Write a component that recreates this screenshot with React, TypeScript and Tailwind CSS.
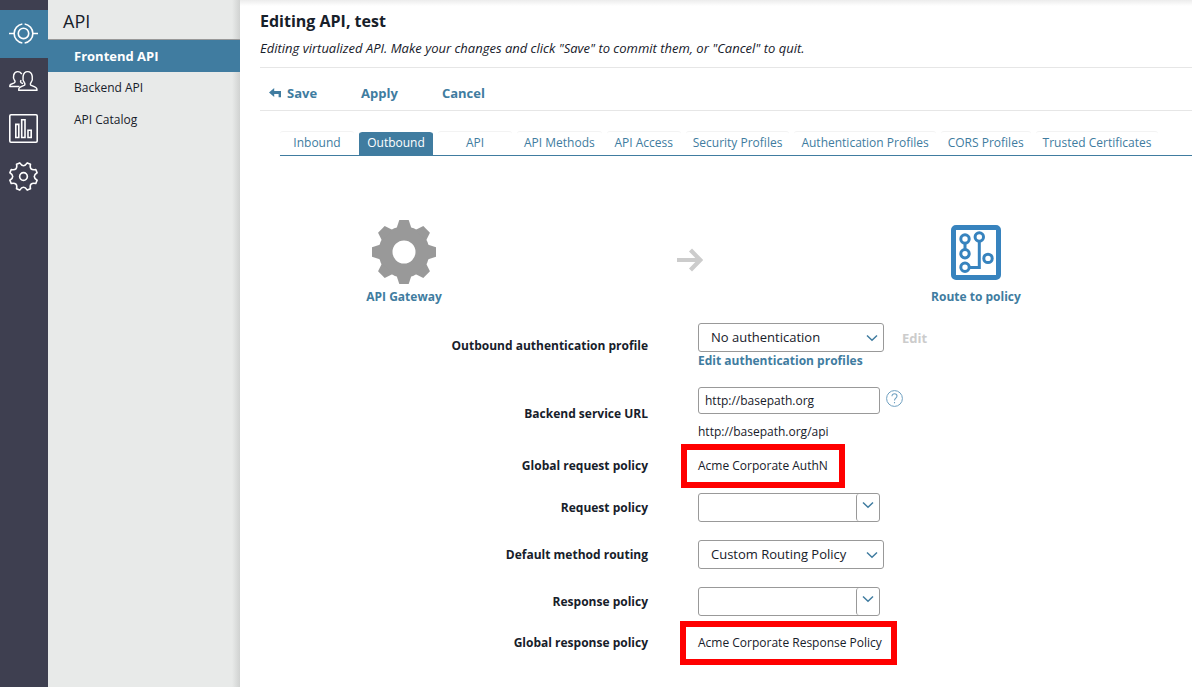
import { useState } from 'react'
import type { ReactNode } from 'react'

const gearTeeth = [0, 45, 90, 135, 180, 225, 270, 315]

function polar(radius: number, degrees: number) {
  const angle = (degrees * Math.PI) / 180
  return `${(radius * Math.cos(angle)).toFixed(2)} ${(radius * Math.sin(angle)).toFixed(2)}`
}

const cogPath =
  gearTeeth
    .map((angle, index) => {
      const tooth = angle + 22.5
      return `${index === 0 ? 'M' : 'L'}${polar(14.6, tooth - 7)}L${polar(14.6, tooth + 7)}Q${polar(8.2, tooth + 22.5)} ${polar(14.6, tooth + 38)}`
    })
    .join('') + 'Z'

function TargetIcon() {
  return (
    <svg width="29" height="29" viewBox="0 -1 30 30" fill="none" stroke="#fff" strokeWidth="1.7" aria-hidden="true">
      <circle cx="15" cy="15" r="5.4" />
      <path d="M13.8 5.2A9.9 9.9 0 0 0 13.8 24.8M16.2 5.2A9.9 9.9 0 0 1 16.2 24.8M0 15H5.2M24.8 15H30" />
    </svg>
  )
}

function UsersIcon() {
  return (
    <svg width="29" height="29" viewBox="0 0 30 30" fill="none" stroke="#fff" strokeWidth="1.5" strokeLinejoin="round" aria-hidden="true">
      <path d="M10 25H29C29 22.5 27.7 21.9 23 20.1C21.9 19.6 21.9 18 22.8 17C25 14.2 25 5.8 19.3 5.8C13.6 5.8 13.6 14.2 15.8 17C16.7 18 16.7 19.6 15.6 20.1C11 21.9 10 22.5 10 25Z" />
      <path d="M10.8 21.2H.8C.8 19.2 1.8 18.8 5.4 17.4C6.5 16.9 6.5 15.8 5.7 14.8C3.7 12 4.4 5.8 9 5.8C11 5.8 12.4 6.8 13.2 8.4M12.6 14.6C11.6 15.8 11.8 16.9 12.8 17.4L14.5 18.2" />
    </svg>
  )
}

function ChartIcon() {
  return (
    <svg width="29" height="29" viewBox="0 0 29 29" fill="none" stroke="#fff" strokeWidth="1.6" aria-hidden="true">
      <rect x=".8" y=".8" width="27.4" height="27.4" rx="1.2" />
      <path d="M6.8 10.4H9.8V23.5H6.8ZM12.7 5.8H16V23.5H12.7ZM19 16.2H22.2V23.5H19Z" />
    </svg>
  )
}

function CogIcon() {
  return (
    <svg width="29" height="29" viewBox="-15 -15 30 30" fill="none" stroke="#fff" strokeWidth="1.7" strokeLinejoin="round" aria-hidden="true">
      <circle r="4" />
      <path d={cogPath} />
    </svg>
  )
}

function GatewayIcon() {
  return (
    <svg width="64" height="64" viewBox="-32 -32 64 64" aria-hidden="true">
      <circle r="18.5" fill="none" stroke="#999" strokeWidth="14" />
      {gearTeeth.map((angle) => (
        <path key={angle} d="M-7.5 -23.5L-4.7 -32H4.7L7.5 -23.5Z" fill="#999" transform={`rotate(${angle})`} />
      ))}
    </svg>
  )
}

function RouteIcon() {
  return (
    <svg width="50" height="56" viewBox="0 0 50 56" fill="none" stroke="#3783be" strokeWidth="3" aria-hidden="true">
      <rect x="2.5" y="2.5" width="45" height="50" rx="2.5" strokeWidth="5" />
      <circle cx="14" cy="14" r="4.2" />
      <circle cx="14" cy="28.7" r="4.2" />
      <circle cx="14" cy="42.2" r="4.2" />
      <circle cx="28.3" cy="12" r="4.2" />
      <circle cx="37" cy="33.4" r="4.2" />
      <path d="M14 18.5V24.5M18.5 42.4H28.3V16.5" />
    </svg>
  )
}

function HelpIcon() {
  return (
    <svg width="17" height="17" viewBox="0 0 17 17" fill="none" stroke="#6fa0c0" aria-hidden="true">
      <circle cx="8.5" cy="8.5" r="7.9" strokeWidth="1" />
      <path d="M6 6.2C6 4.6 7 3.8 8.5 3.8C10 3.8 11 4.8 11 6.1C11 8 8.5 8.2 8.5 10.4M8.5 11.9V13.2" strokeWidth="1.1" />
    </svg>
  )
}

function Chevron() {
  return (
    <svg width="12" height="8" viewBox="0 0 12 8" fill="none" stroke="#407ca0" strokeWidth="1.5" aria-hidden="true">
      <path d="M1 1.5L6 6.2L11 1.5" />
    </svg>
  )
}

const rail = [
  { label: 'API', icon: <TargetIcon /> },
  { label: 'Users', icon: <UsersIcon /> },
  { label: 'Monitoring', icon: <ChartIcon /> },
  { label: 'Settings', icon: <CogIcon /> },
]

const menu = ['Frontend API', 'Backend API', 'API Catalog']

const tabs = [
  'Inbound',
  'Outbound',
  'API',
  'API Methods',
  'API Access',
  'Security Profiles',
  'Authentication Profiles',
  'CORS Profiles',
  'Trusted Certificates',
]

function Row({ label, htmlFor, className, children }: { label: string; htmlFor?: string; className: string; children: ReactNode }) {
  const style = 'w-[388px] shrink-0 text-right font-bold'
  return (
    <div className={`flex items-center gap-[50px] ${className}`}>
      {htmlFor ? (
        <label htmlFor={htmlFor} className={style}>{label}</label>
      ) : (
        <span className={style}>{label}</span>
      )}
      {children}
    </div>
  )
}

function Select({ id, options }: { id: string; options: string[] }) {
  return (
    <div className="relative w-[186px]">
      <select id={id} className="block h-[29px] w-full appearance-none rounded-[3px] border border-[#999] bg-white pb-0.5 pl-3 pr-8 text-[13px] outline-none">
        {options.map((option) => (
          <option key={option}>{option}</option>
        ))}
      </select>
      <span className="pointer-events-none absolute right-1.5 top-[11px]">
        <Chevron />
      </span>
    </div>
  )
}

function Combo({ id, label }: { id: string; label: string }) {
  return (
    <div className="flex h-[29px] w-[182px] rounded-[3px] border border-[#999] bg-white">
      <input id={id} className="min-w-0 flex-1 px-1.5 outline-none" />
      <button aria-label={`Choose ${label}`} className="flex w-[23px] justify-center rounded-[3px] border-l border-[#999] pt-[7px]">
        <Chevron />
      </button>
    </div>
  )
}

export default function App() {
  const [tab, setTab] = useState('Outbound')
  const [url, setUrl] = useState('http://basepath.org')

  return (
    <div className="flex min-h-screen bg-white font-['Open_Sans',sans-serif] text-xs leading-4 text-[#17202a]">
      <nav aria-label="Sections" className="w-12 shrink-0 bg-[#3e3f50] pt-2.5">
        {rail.map((item, index) => (
          <a
            key={item.label}
            href="#"
            aria-label={item.label}
            className={`flex h-12 pt-2 pl-[9px] ${index === 0 ? 'bg-[#407ca0]' : ''}`}
          >
            {item.icon}
          </a>
        ))}
      </nav>

      <aside className="w-48 shrink-0 bg-[#e8eae9] bg-[linear-gradient(to_left,#d0d2d1,transparent_8px)]">
        <h2 className="h-10 border-b border-[#999] pl-[15px] pt-[7px] text-lg leading-7">API</h2>
        {menu.map((item, index) => (
          <a
            key={item}
            href="#"
            className={`flex h-8 items-center pl-[26px] ${index === 0 ? 'bg-[#407ca0] text-[13px] font-bold text-white' : ''}`}
          >
            {item}
          </a>
        ))}
      </aside>

      <main className="min-w-0 flex-1 bg-[linear-gradient(to_bottom,#ececec,transparent_6px)] pl-5">
        <h1 className="pt-[9px] text-base leading-6 font-bold">Editing API, test</h1>
        <p className="border-b border-[#e6e6e6] pt-[7px] pb-[11px] text-[13px] italic">
          Editing virtualized API. Make your changes and click "Save" to commit them, or "Cancel" to quit.
        </p>
        <div className="flex h-[43px] items-center border-b border-[#e6e6e6] pt-2 pl-[9px] text-[13px] font-bold text-[#407ca0]">
          <button className="mr-11 flex items-center gap-1.5">
            <svg width="12" height="10" viewBox="0 0 12 10" fill="#407ca0" aria-hidden="true">
              <path d="M0 4.5L5.2 0V3H12V9.3H9.6V6H5.2V9Z" />
            </svg>
            Save
          </button>
          <button className="mr-11">Apply</button>
          <button>Cancel</button>
        </div>

        <div role="tablist" className="mt-5 ml-5 flex gap-[5px] border-b border-[#407ca0] whitespace-nowrap">
          {tabs.map((name) => (
            <button
              key={name}
              role="tab"
              aria-selected={tab === name}
              onClick={() => setTab(name)}
              className={`h-6 min-w-[74px] rounded-t-[3px] border-t px-[7px] pb-0.5 text-center ${
                tab === name ? 'border-white bg-[#407ca0] bg-clip-padding text-white' : 'border-[#f3f3f3] text-[#407ca0]'
              }`}
            >
              {name}
            </button>
          ))}
        </div>

        <section className="pt-16 pb-5">
          <div className="flex items-start font-bold text-[#407ca0]">
            <div className="ml-[84px] flex w-[120px] flex-col items-center gap-[5px]">
              <GatewayIcon />
              <span>API Gateway</span>
            </div>
            <svg className="mt-7 ml-[213px]" width="26" height="24" viewBox="0 0 26 24" fill="none" stroke="#ccc" strokeWidth="4.2" aria-hidden="true">
              <path d="M0 12H23M13.5 2L23.2 12L13.5 22" />
            </svg>
            <div className="mt-[5px] ml-[213px] flex w-[120px] flex-col items-center gap-2">
              <RouteIcon />
              <span>Route to policy</span>
            </div>
          </div>

          <Row label="Outbound authentication profile" htmlFor="auth" className="mt-[18px]">
            <div>
              <div className="flex items-center gap-[18px]">
                <Select id="auth" options={['No authentication', 'Pass through']} />
                <button disabled className="text-[13px] font-bold text-[#ccc]">Edit</button>
              </div>
              <a href="#" className="mt-px block font-bold text-[#407ca0]">Edit authentication profiles</a>
            </div>
          </Row>
          <Row label="Backend service URL" htmlFor="url" className="mt-[18px]">
            <div>
              <div className="flex items-start gap-1.5">
                <input
                  id="url"
                  value={url}
                  onChange={(event) => setUrl(event.target.value)}
                  className="h-[27px] w-[182px] rounded-[3px] border border-[#999] px-1.5 outline-none"
                />
                <button aria-label="Help" className="mt-[3px]">
                  <HelpIcon />
                </button>
              </div>
              <span className="mt-2.5 block">{url}/api</span>
            </div>
          </Row>
          <Row label="Global request policy" className="mt-1">
            <span className="-ml-[17px] border-[6px] border-[#f00] px-[11px] py-2">Acme Corporate AuthN</span>
          </Row>
          <Row label="Request policy" htmlFor="request" className="mt-[5px]">
            <Combo id="request" label="request policy" />
          </Row>
          <Row label="Default method routing" htmlFor="routing" className="mt-[18px]">
            <Select id="routing" options={['Custom Routing Policy', 'API Proxy']} />
          </Row>
          <Row label="Response policy" htmlFor="response" className="mt-[18px]">
            <Combo id="response" label="response policy" />
          </Row>
          <Row label="Global response policy" className="mt-[5px]">
            <span className="-ml-[18px] border-[6px] border-[#f00] pr-[9px] pl-3 py-2">Acme Corporate Response Policy</span>
          </Row>
        </section>
      </main>
    </div>
  )
}
